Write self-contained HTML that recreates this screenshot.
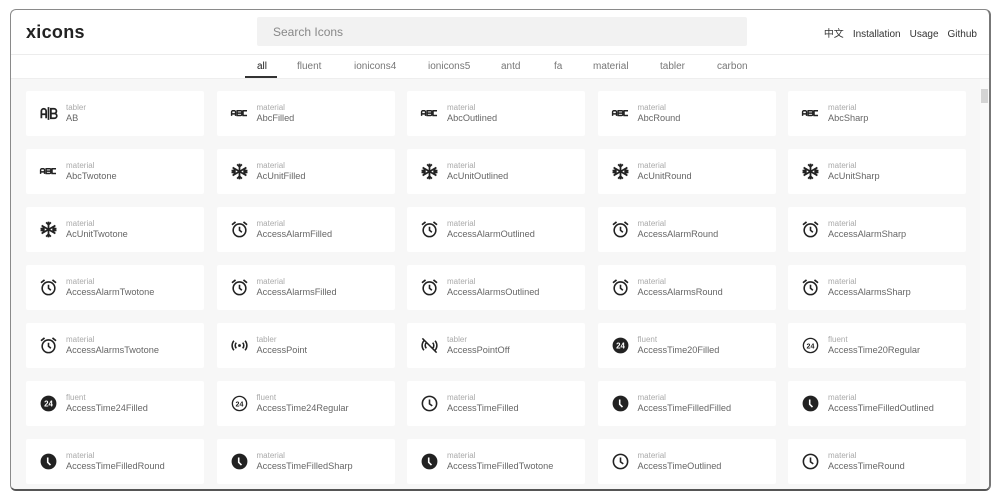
<!DOCTYPE html>
<html><head><meta charset="utf-8"><style>
*{box-sizing:border-box;margin:0;padding:0}
body{width:1000px;height:500px;background:#fff;font-family:"Liberation Sans","Noto Sans CJK SC",sans-serif;position:relative;overflow:hidden}
.frame{position:absolute;left:10px;top:9px;width:981px;height:482px;border:1px solid #8a8a8a;border-bottom:2px solid #555;border-right:2px solid #777;border-radius:6px;overflow:hidden;background:#fff}
.logo{position:absolute;left:15px;top:12px;font-size:18px;font-weight:bold;color:#222;letter-spacing:0.3px}
.search{position:absolute;left:246px;top:7px;width:490px;height:29px;background:#f2f2f2;border-radius:2px;font-size:12px;color:#888;padding:8px 16px}
.nav{position:absolute;right:12px;top:15px;font-size:10px;color:#333;word-spacing:0}
.nav span{margin-left:9px}
.hl{position:absolute;left:0;right:0;top:44px;border-top:1px solid #ececec}
.tabs{position:absolute;left:0;right:0;top:45px;height:24px;font-size:10px;color:#777}
.tabs span{position:absolute;top:6px}
.ul{position:absolute;left:234px;top:21px;width:32px;height:2px;background:#333}
.content{position:absolute;left:0;top:68px;right:0;bottom:0;background:#f7f7f7;border-top:1px solid #eee}
.grid{position:absolute;left:15px;top:12px;display:grid;grid-template-columns:repeat(5,178px);column-gap:12.5px;row-gap:13px}
.c{height:45px;background:#fff;border-radius:2px;position:relative}
.c svg{position:absolute;left:13px;top:13px;width:19px;height:19px}
.c .l{position:absolute;left:40px;top:12px;font-size:8px;color:#aaa}
.c .n{position:absolute;left:40px;top:22px;font-size:9.2px;color:#666}
.sb{position:absolute;right:0;top:0;width:9px;bottom:0;background:#fafafa}
.th{position:absolute;right:1px;top:10px;width:7px;height:14px;background:#d4d4d4}
</style></head><body>
<svg width="0" height="0" style="position:absolute">
<defs>
<symbol id="ab" viewBox="0 0 24 24"><path d="M3 18V9a3 3 0 0 1 6 0v9M3 13h6M12 4v16M15 6h4a3 3 0 0 1 0 6h-4zM15 12h4.5a3 3 0 0 1 0 6H15z" fill="none" stroke="#222" stroke-width="2.2"/></symbol>
<symbol id="abc" viewBox="0 0 24 24"><path d="M2 15v-5a1.5 1.5 0 0 1 1.5-1.5h2A1.5 1.5 0 0 1 7 10v5M2 12.5h5M9 8.5h4.5a1.2 1.2 0 0 1 0 3H9zM9 11.5h4.5a1.2 1.2 0 0 1 0 3H9zM9 8.5v6M21.5 8.5h-5v6h5" fill="none" stroke="#222" stroke-width="1.8"/></symbol>
<symbol id="snow" viewBox="0 0 24 24"><g stroke="#222" stroke-width="2.2" fill="none"><path d="M12 2v20M3.3 7l17.4 10M3.3 17L20.7 7"/><path d="M9 3l3 3 3-3M9 21l3-3 3 3M2 10.5l4 1.5-1 -4M22 13.5l-4-1.5 1 4M2 13.5l4-1.5-1 4M22 10.5l-4 1.5 1-4"/></g></symbol>
<symbol id="alarm" viewBox="0 0 24 24"><g fill="none" stroke="#222" stroke-width="2"><circle cx="12" cy="13" r="8"/><path d="M12 8.5V13l3 2.5"/><path d="M2.5 6L7 2.5M21.5 6L17 2.5" stroke-width="2.2"/></g></symbol>
<symbol id="clock" viewBox="0 0 24 24"><g fill="none" stroke="#222" stroke-width="2"><circle cx="12" cy="12" r="9"/><path d="M12 7v5.5l3.5 2.5"/></g></symbol>
<symbol id="clockf" viewBox="0 0 24 24"><circle cx="12" cy="12" r="10" fill="#222"/><path d="M11 7v6l3.5 3.5" fill="none" stroke="#fff" stroke-width="2"/></symbol>
<symbol id="t24f" viewBox="0 0 24 24"><circle cx="12" cy="12" r="10" fill="#222"/><text x="12" y="15.5" font-family="Liberation Sans" font-weight="bold" font-size="10" fill="#fff" text-anchor="middle">24</text></symbol>
<symbol id="t24r" viewBox="0 0 24 24"><circle cx="12" cy="12" r="9" fill="none" stroke="#222" stroke-width="1.7"/><text x="12" y="15.5" font-family="Liberation Sans" font-weight="bold" font-size="9" fill="#222" text-anchor="middle">24</text></symbol>
<symbol id="ap" viewBox="0 0 24 24"><g fill="none" stroke="#222" stroke-width="2"><path d="M8 8.5a5 5 0 0 0 0 7M16 8.5a5 5 0 0 1 0 7M5 6a9 9 0 0 0 0 12M19 6a9 9 0 0 1 0 12"/><circle cx="12" cy="12" r="0.8" fill="#222"/></g></symbol>
<symbol id="apo" viewBox="0 0 24 24"><g fill="none" stroke="#222" stroke-width="2"><path d="M8 8.5a5 5 0 0 0 0 7M16 8.5a5 5 0 0 1 0 7M5 6a9 9 0 0 0 0 12M19 6a9 9 0 0 1 0 12M3 3l18 18"/></g></symbol>
</defs></svg>
<div class="frame">
<div class="logo">xicons</div>
<div class="search">Search Icons</div>
<div class="nav">中文<span>Installation</span><span>Usage</span><span>Github</span></div>
<div class="hl"></div>
<div class="tabs">
<span style="left:246px;color:#222">all</span><span style="left:286px">fluent</span><span style="left:343px">ionicons4</span><span style="left:417px">ionicons5</span><span style="left:490px">antd</span><span style="left:543px">fa</span><span style="left:582px">material</span><span style="left:649px">tabler</span><span style="left:706px">carbon</span>
<div class="ul"></div></div>
<div class="content">
<div class="grid">
<div class="c"><svg><use href="#ab"/></svg><div class="l">tabler</div><div class="n">AB</div></div>
<div class="c"><svg><use href="#abc"/></svg><div class="l">material</div><div class="n">AbcFilled</div></div>
<div class="c"><svg><use href="#abc"/></svg><div class="l">material</div><div class="n">AbcOutlined</div></div>
<div class="c"><svg><use href="#abc"/></svg><div class="l">material</div><div class="n">AbcRound</div></div>
<div class="c"><svg><use href="#abc"/></svg><div class="l">material</div><div class="n">AbcSharp</div></div>
<div class="c"><svg><use href="#abc"/></svg><div class="l">material</div><div class="n">AbcTwotone</div></div>
<div class="c"><svg><use href="#snow"/></svg><div class="l">material</div><div class="n">AcUnitFilled</div></div>
<div class="c"><svg><use href="#snow"/></svg><div class="l">material</div><div class="n">AcUnitOutlined</div></div>
<div class="c"><svg><use href="#snow"/></svg><div class="l">material</div><div class="n">AcUnitRound</div></div>
<div class="c"><svg><use href="#snow"/></svg><div class="l">material</div><div class="n">AcUnitSharp</div></div>
<div class="c"><svg><use href="#snow"/></svg><div class="l">material</div><div class="n">AcUnitTwotone</div></div>
<div class="c"><svg><use href="#alarm"/></svg><div class="l">material</div><div class="n">AccessAlarmFilled</div></div>
<div class="c"><svg><use href="#alarm"/></svg><div class="l">material</div><div class="n">AccessAlarmOutlined</div></div>
<div class="c"><svg><use href="#alarm"/></svg><div class="l">material</div><div class="n">AccessAlarmRound</div></div>
<div class="c"><svg><use href="#alarm"/></svg><div class="l">material</div><div class="n">AccessAlarmSharp</div></div>
<div class="c"><svg><use href="#alarm"/></svg><div class="l">material</div><div class="n">AccessAlarmTwotone</div></div>
<div class="c"><svg><use href="#alarm"/></svg><div class="l">material</div><div class="n">AccessAlarmsFilled</div></div>
<div class="c"><svg><use href="#alarm"/></svg><div class="l">material</div><div class="n">AccessAlarmsOutlined</div></div>
<div class="c"><svg><use href="#alarm"/></svg><div class="l">material</div><div class="n">AccessAlarmsRound</div></div>
<div class="c"><svg><use href="#alarm"/></svg><div class="l">material</div><div class="n">AccessAlarmsSharp</div></div>
<div class="c"><svg><use href="#alarm"/></svg><div class="l">material</div><div class="n">AccessAlarmsTwotone</div></div>
<div class="c"><svg><use href="#ap"/></svg><div class="l">tabler</div><div class="n">AccessPoint</div></div>
<div class="c"><svg><use href="#apo"/></svg><div class="l">tabler</div><div class="n">AccessPointOff</div></div>
<div class="c"><svg><use href="#t24f"/></svg><div class="l">fluent</div><div class="n">AccessTime20Filled</div></div>
<div class="c"><svg><use href="#t24r"/></svg><div class="l">fluent</div><div class="n">AccessTime20Regular</div></div>
<div class="c"><svg><use href="#t24f"/></svg><div class="l">fluent</div><div class="n">AccessTime24Filled</div></div>
<div class="c"><svg><use href="#t24r"/></svg><div class="l">fluent</div><div class="n">AccessTime24Regular</div></div>
<div class="c"><svg><use href="#clock"/></svg><div class="l">material</div><div class="n">AccessTimeFilled</div></div>
<div class="c"><svg><use href="#clockf"/></svg><div class="l">material</div><div class="n">AccessTimeFilledFilled</div></div>
<div class="c"><svg><use href="#clockf"/></svg><div class="l">material</div><div class="n">AccessTimeFilledOutlined</div></div>
<div class="c"><svg><use href="#clockf"/></svg><div class="l">material</div><div class="n">AccessTimeFilledRound</div></div>
<div class="c"><svg><use href="#clockf"/></svg><div class="l">material</div><div class="n">AccessTimeFilledSharp</div></div>
<div class="c"><svg><use href="#clockf"/></svg><div class="l">material</div><div class="n">AccessTimeFilledTwotone</div></div>
<div class="c"><svg><use href="#clock"/></svg><div class="l">material</div><div class="n">AccessTimeOutlined</div></div>
<div class="c"><svg><use href="#clock"/></svg><div class="l">material</div><div class="n">AccessTimeRound</div></div>
</div>
<div class="sb"><div class="th"></div></div>
</div>
</div>
</body></html>
